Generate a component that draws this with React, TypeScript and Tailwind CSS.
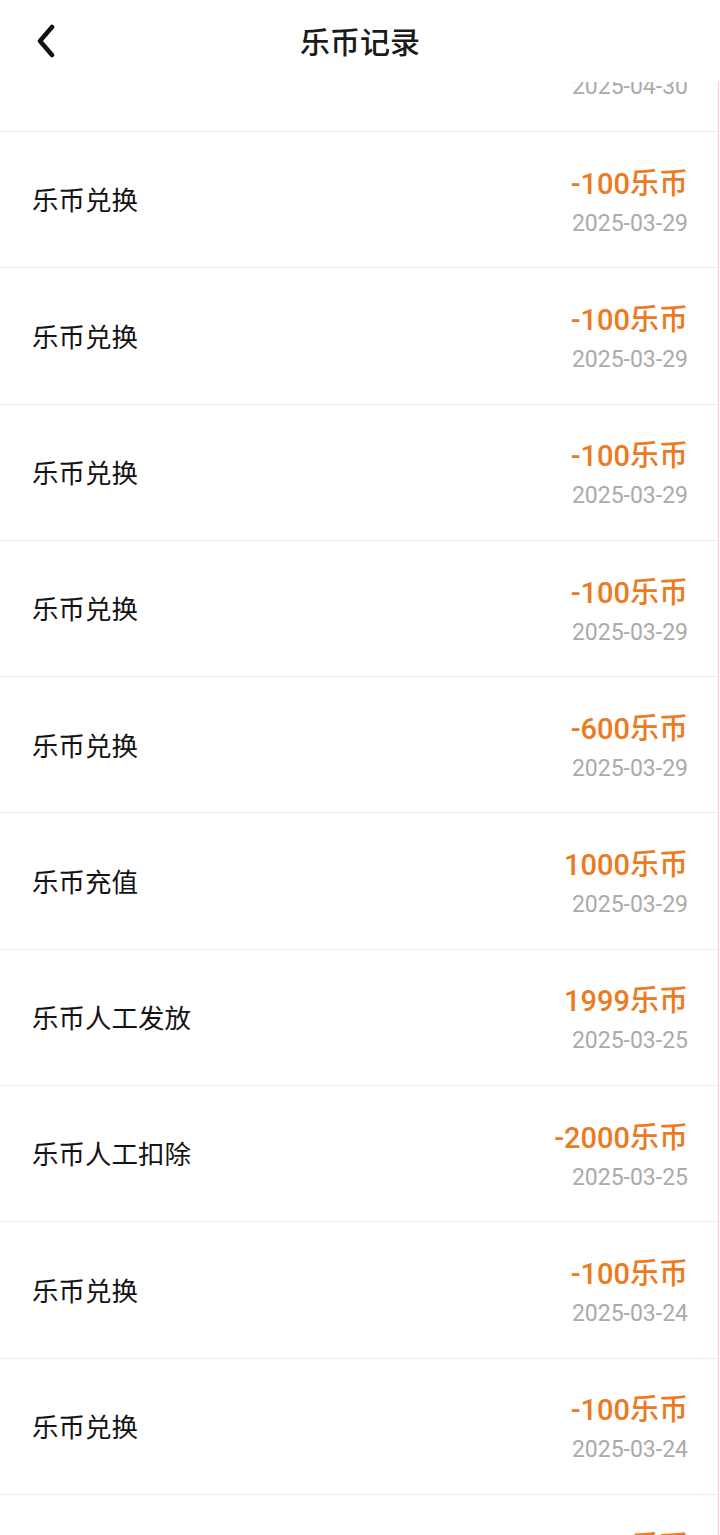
import React from "react";

type Rec = { title: string; amount: string; date: string };

const records: Rec[] = [
  { title: "乐币兑换", amount: "-100乐币", date: "2025-04-30" },
  { title: "乐币兑换", amount: "-100乐币", date: "2025-03-29" },
  { title: "乐币兑换", amount: "-100乐币", date: "2025-03-29" },
  { title: "乐币兑换", amount: "-100乐币", date: "2025-03-29" },
  { title: "乐币兑换", amount: "-100乐币", date: "2025-03-29" },
  { title: "乐币兑换", amount: "-600乐币", date: "2025-03-29" },
  { title: "乐币充值", amount: "1000乐币", date: "2025-03-29" },
  { title: "乐币人工发放", amount: "1999乐币", date: "2025-03-25" },
  { title: "乐币人工扣除", amount: "-2000乐币", date: "2025-03-25" },
  { title: "乐币兑换", amount: "-100乐币", date: "2025-03-24" },
  { title: "乐币兑换", amount: "-100乐币", date: "2025-03-24" },
  { title: "乐币兑换", amount: "-100乐币", date: "2025-03-24" },
];

export default function App() {
  return (
    <div
      className="relative h-[1535px] w-[720px] overflow-hidden bg-white"
      style={{ fontFamily: 'Roboto, "Noto Sans CJK SC", sans-serif' }}
    >
      <header className="absolute left-0 top-0 z-10 flex h-[82px] w-full items-start justify-center bg-white pt-[24px]">
        <button className="absolute left-[34px] top-[24px] flex h-[34px] w-[24px] items-center justify-center">
          <svg width="22" height="34" viewBox="0 0 22 34" fill="none">
            <polyline
              points="17,3 5,17 17,31"
              stroke="#111"
              strokeWidth="4.5"
              strokeLinecap="round"
              strokeLinejoin="round"
            />
          </svg>
        </button>
        <h1
          className="text-[30px] font-medium leading-[32px] text-[#1a1a1a]"
          style={{ fontFamily: '"Noto Sans CJK SC", sans-serif' }}
        >
          乐币记录
        </h1>
      </header>

      <div className="-mt-[4.3px] flex">
        <div className="w-[718px]">
          {records.map((r, i) => (
            <div
              key={i}
              className="flex h-[136.3px] items-center justify-between border-b border-[#ececec] pl-[32px] pr-[30px]"
            >
              <span
                className="text-[26.5px] leading-none text-[#141414]"
                style={{ fontFamily: '"Noto Sans CJK SC", sans-serif' }}
              >
                {r.title}
              </span>
              <div className="flex flex-col items-end pt-[4px]">
                <span className="text-[29px] font-medium leading-[36px] text-[#ec7a1e]">
                  {r.amount}
                </span>
                <span className="mt-[8px] text-[23px] leading-[28px] text-[#ababab]">
                  {r.date}
                </span>
              </div>
            </div>
          ))}
        </div>
        <div className="w-px bg-[#f4c9d3]" />
        <div className="w-px bg-white" />
      </div>
    </div>
  );
}
